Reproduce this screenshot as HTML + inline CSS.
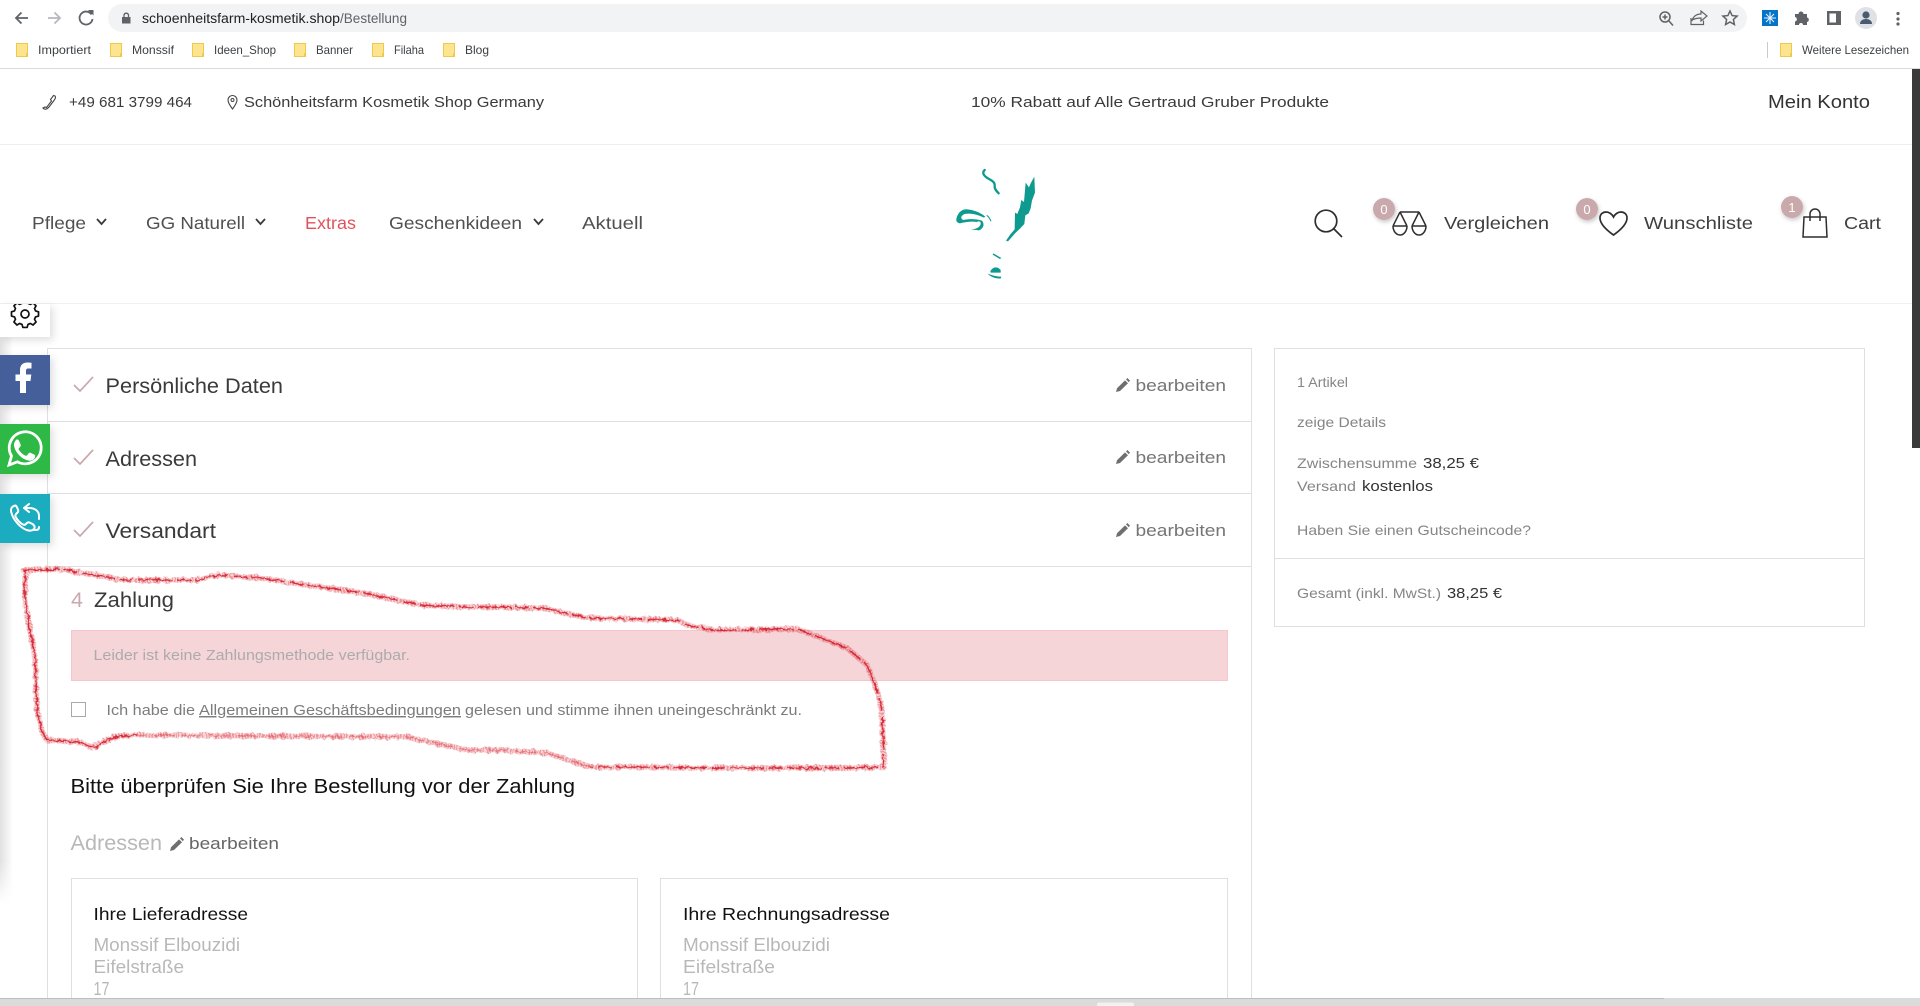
<!DOCTYPE html>
<html lang="de">
<head>
<meta charset="utf-8">
<title>Bestellung</title>
<style>
html,body{margin:0;padding:0;background:#fff;width:1920px;height:1006px;overflow:hidden}
svg{display:block}
text{font-family:"Liberation Sans",sans-serif;white-space:pre}
</style>
</head>
<body>
<svg xmlns="http://www.w3.org/2000/svg" width="1920" height="1006" viewBox="0 0 1920 1006">
<defs>
<filter id="sh" x="-40%" y="-40%" width="180%" height="180%"><feDropShadow dx="1" dy="2" stdDeviation="2" flood-color="#000" flood-opacity=".22"/></filter>
<filter id="sh2" x="-40%" y="-40%" width="180%" height="180%"><feDropShadow dx="3" dy="3" stdDeviation="4" flood-color="#000" flood-opacity=".13"/></filter>
<filter id="rough" x="-5%" y="-5%" width="110%" height="110%"><feTurbulence type="fractalNoise" baseFrequency=".22" numOctaves="2" seed="3"/><feDisplacementMap in="SourceGraphic" scale="5"/></filter>
<filter id="soft" x="-5%" y="-5%" width="110%" height="110%"><feGaussianBlur stdDeviation="1.100"/></filter>
<linearGradient id="edge" x1="0" x2="1" y1="0" y2="0"><stop offset="0" stop-color="#e0e0e0"/><stop offset="1" stop-color="#fff"/></linearGradient>
<linearGradient id="fade" x1="0" x2="0" y1="0" y2="1"><stop offset="0" stop-color="#fff" stop-opacity="0"/><stop offset="1" stop-color="#fff"/></linearGradient>
<g id="pen"><path fill="#6f6f6f" d="M0 14 L1 10.200 L9 2.400 L12 5.200 L4 13 Z M10 1.400 L11.400 0 L14 2.600 L12.800 4.200 Z"/></g>
<g id="folder"><path fill="#fde58f" stroke="#eec94b" stroke-width="1" d="M.5 .5H11.500V13.500H.5Z"/><path fill="#eec94b" d="M10 10h2v4h-2z"/></g>
<g id="chk"><path fill="none" stroke="#c9a9ac" stroke-width="1.700" d="M0 8 L6 14 L19 0"/></g>
</defs>

<!-- browser chrome -->
<rect x="108" y="4" width="1639" height="28" rx="14" fill="#f1f3f4"/>
<g fill="none" stroke="#5f6368" stroke-width="1.800">
<path d="M28 18H16M21.500 12.500L16 18l5.500 5.500"/>
<path stroke="#b5b8bc" d="M48 18H60M54.500 12.500L60 18l-5.500 5.500"/>
<path d="M91.500 14.500a6.500 6.500 0 1 0 1 4.500"/>
</g>
<path fill="#5f6368" d="M88 10l5.500 0v5.500z"/>
<path fill="#5f6368" d="M122 17h8.500v6.500h-8.500z"/>
<path fill="none" stroke="#5f6368" stroke-width="1.300" d="M124 17v-2a2.300 2.300 0 0 1 4.500 0v2"/>
<text x="142" y="23" font-size="13.500" fill="#202124" textLength="198" lengthAdjust="spacingAndGlyphs">schoenheitsfarm-kosmetik.shop</text>
<text x="340" y="23" font-size="13.500" fill="#5f6368" textLength="67" lengthAdjust="spacingAndGlyphs">/Bestellung</text>
<g fill="none" stroke="#5f6368" stroke-width="1.500">
<circle cx="1665" cy="17" r="5"/><path d="M1669 21l4 4.500M1665 14.500v5M1662.500 17h5"/>
<path d="M1691 18v6.500h12.500v-4M1692 21c1-5 5-7 9-7v-3l6 5-6 5v-3c-4 0-7 1-9 2z" stroke-width="1.200"/>
<path d="M1730 11l2.100 4.600 5 .5-3.700 3.400 1 5-4.400-2.500-4.400 2.500 1-5-3.700-3.400 5-.5z"/>
</g>
<rect x="1762" y="10" width="16" height="16" fill="#0573c7"/>
<path stroke="#e6f2ff" stroke-width="1.100" d="M1770 12v12M1764 18h12M1766 14l8 8M1774 14l-8 8"/>
<path fill="#5f6368" d="M1795 14h3.500a2.500 2.500 0 0 1 5 0h3.500v3.500a2.300 2.300 0 0 1 0 4.500V25h-4a2 2 0 0 0-4 0h-4v-3.500a2.300 2.300 0 0 0 0-4.500z"/>
<path fill="#5f6368" fill-rule="evenodd" d="M1827 11h14v14h-14zM1829.500 13.500v9h6.500v-9z"/>
<circle cx="1866" cy="18" r="11" fill="#dfe1e5"/>
<circle cx="1866" cy="15" r="3.600" fill="#4a5a70"/>
<path fill="#4a5a70" d="M1860 24c0-3.500 3-5 6-5s6 1.500 6 5z"/>
<g fill="#5f6368"><circle cx="1898" cy="13.500" r="1.600"/><circle cx="1898" cy="19" r="1.600"/><circle cx="1898" cy="24" r="1.600"/></g>

<use href="#folder" x="16" y="43"/><use href="#folder" x="110" y="43"/><use href="#folder" x="192" y="43"/><use href="#folder" x="294" y="43"/><use href="#folder" x="372" y="43"/><use href="#folder" x="443" y="43"/><use href="#folder" x="1780" y="43"/>
<g font-size="12" fill="#3c4043">
<text x="38" y="54" textLength="53" lengthAdjust="spacingAndGlyphs">Importiert</text>
<text x="132" y="54" textLength="42" lengthAdjust="spacingAndGlyphs">Monssif</text>
<text x="214" y="54" textLength="62" lengthAdjust="spacingAndGlyphs">Ideen_Shop</text>
<text x="316" y="54" textLength="37" lengthAdjust="spacingAndGlyphs">Banner</text>
<text x="394" y="54" textLength="30" lengthAdjust="spacingAndGlyphs">Filaha</text>
<text x="465" y="54" textLength="24" lengthAdjust="spacingAndGlyphs">Blog</text>
<text x="1802" y="54" textLength="107" lengthAdjust="spacingAndGlyphs">Weitere Lesezeichen</text>
</g>
<rect x="1767" y="42" width="1" height="16" fill="#c8cacc"/>
<rect x="0" y="68" width="1920" height="1" fill="#d9dadb"/>

<!-- top strip -->
<rect x="1912" y="69" width="8" height="379" fill="#3a3a3a"/>
<rect x="0" y="144" width="1912" height="1" fill="#eeeeee"/>
<path fill="none" stroke="#444" stroke-width="1.100" d="M43 108c1.500 2 4 1.500 6-1l5-6.500c1.500-2 2-3.500 1-4.500l-1.500-.5-3 4 1 1.500-5 6.500-1.500-.5z"/>
<g font-size="14.500" fill="#3b3b3b">
<text x="69" y="107" textLength="123" lengthAdjust="spacingAndGlyphs">+49 681 3799 464</text>
<text x="244" y="107" textLength="300" lengthAdjust="spacingAndGlyphs">Schönheitsfarm Kosmetik Shop Germany</text>
<text x="971" y="107" textLength="358" lengthAdjust="spacingAndGlyphs">10% Rabatt auf Alle Gertraud Gruber Produkte</text>
</g>
<path fill="none" stroke="#444" stroke-width="1.100" d="M232.500 109c-3-4-4.500-6.500-4.500-9a4.500 4.500 0 0 1 9 0c0 2.500-1.500 5-4.500 9z"/>
<circle cx="232.500" cy="100" r="1.500" fill="none" stroke="#444"/>
<text x="1768" y="108" font-size="18.500" fill="#333" textLength="102" lengthAdjust="spacingAndGlyphs">Mein Konto</text>

<!-- nav -->
<g font-size="17.500" fill="#505050">
<text x="32" y="229" textLength="54" lengthAdjust="spacingAndGlyphs">Pflege</text>
<text x="146" y="229" textLength="99" lengthAdjust="spacingAndGlyphs">GG Naturell</text>
<text x="305" y="229" fill="#e0525b" textLength="51" lengthAdjust="spacingAndGlyphs">Extras</text>
<text x="389" y="229" textLength="133" lengthAdjust="spacingAndGlyphs">Geschenkideen</text>
<text x="582" y="229" textLength="61" lengthAdjust="spacingAndGlyphs">Aktuell</text>
</g>
<g fill="none" stroke="#3a3a3a" stroke-width="1.800">
<path d="M97 219l4.500 5 4.500-5"/><path d="M256 219l4.500 5 4.500-5"/><path d="M534 219l4.500 5 4.500-5"/>
</g>

<!-- logo -->
<g transform="translate(880 150) scale(.3333)" fill="#0f9a90">
<path fill="none" stroke="#0f9a90" stroke-width="7" stroke-linecap="round" d="M314 60c-8 8-4 16 8 24 14 8 24 12 22 26 0 8 6 14 12 20"/>
<path d="M378 272L392 252L404 238L405 188L412 192L420 172L424 150L432 156L437 98L447 112L452 100L463 80L465 128L456 152L452 175L446 190L436 196L433 222L420 236L405 250L384 274Z"/>
<path d="M229 208C232 190 245 176 262 178C285 180 305 190 316 200L312 203C295 194 270 188 254 192C243 196 240 206 250 210C265 206 290 206 306 212C314 222 312 234 298 241L272 238C290 238 302 230 302 220C290 212 262 214 240 220C232 218 228 214 229 208Z"/>
<circle cx="296" cy="220" r="6" fill="#fff"/>
<path fill="none" stroke="#0f9a90" stroke-width="3" d="M320 196c6 4 10 10 13 18"/>
<path d="M340 310L364 324L360 327L338 314Z"/>
<path d="M331 364C338 350 352 348 362 360L362 368L332 368Z"/>
<path d="M323 371C335 376 350 380 364 380L362 386C345 386 330 380 323 371Z"/>
</g>

<!-- right icons -->
<g fill="none" stroke="#2e2e2e" stroke-width="1.700">
<circle cx="1326" cy="221" r="10.800"/><path d="M1334 229l8 8"/>
<path stroke-width="1.500" d="M1400 212H1419M1400 212L1393 226M1400 212L1407 226M1419 212L1412 226M1419 212L1426 226M1393 226H1407M1412 226H1426M1393 226a7 9 0 0 0 14 0M1412 226a7 9 0 0 0 14 0"/>
<path d="M1613.500 235C1605 229 1600 223 1600 218C1600 214 1603 212 1606 212C1609 212 1612 214 1613.500 217C1615 214 1618 212 1621 212C1624 212 1627 214 1627 218C1627 223 1622 229 1613.500 235Z"/>
<path stroke-width="1.500" d="M1804 217H1826L1827 237H1803ZM1810 221V214a5 5 0 0 1 10 0V221"/>
</g>
<g font-size="17.500" fill="#3f3f3f">
<text x="1444" y="229" textLength="105" lengthAdjust="spacingAndGlyphs">Vergleichen</text>
<text x="1644" y="229" textLength="109" lengthAdjust="spacingAndGlyphs">Wunschliste</text>
<text x="1844" y="229" textLength="37" lengthAdjust="spacingAndGlyphs">Cart</text>
</g>
<g filter="url(#sh)" fill="#c9a9ac"><circle cx="1384" cy="209" r="11"/><circle cx="1587" cy="209" r="11"/><circle cx="1792" cy="207" r="11"/></g>
<g font-size="13" fill="#fff" text-anchor="middle"><text x="1384" y="214">0</text><text x="1587" y="214">0</text><text x="1792" y="212">1</text></g>
<rect x="0" y="303" width="1912" height="1" fill="#f0f0f0"/>

<!-- main card lines -->
<g fill="#dfdfdf">
<rect x="47" y="348" width="1205" height="1"/>
<rect x="47" y="348" width="1" height="650"/>
<rect x="1251" y="348" width="1" height="650"/>
<rect x="47" y="421" width="1205" height="1"/>
<rect x="47" y="493" width="1205" height="1"/>
<rect x="47" y="566" width="1205" height="1"/>
</g>
<use href="#chk" x="74" y="377"/><use href="#chk" x="74" y="450"/><use href="#chk" x="74" y="522"/>
<g font-size="21" fill="#3a3a3a">
<text x="105.500" y="393" textLength="177.500" lengthAdjust="spacingAndGlyphs">Persönliche Daten</text>
<text x="105.500" y="466" textLength="91.500" lengthAdjust="spacingAndGlyphs">Adressen</text>
<text x="105.500" y="538" textLength="110.500" lengthAdjust="spacingAndGlyphs">Versandart</text>
<text x="94" y="607" textLength="80" lengthAdjust="spacingAndGlyphs">Zahlung</text>
<text x="71" y="607" fill="#c9a9ac" textLength="12" lengthAdjust="spacingAndGlyphs">4</text>
</g>
<use href="#pen" x="1116" y="378"/><use href="#pen" x="1116" y="450"/><use href="#pen" x="1116" y="523"/>
<g font-size="17" fill="#757575">
<text x="1135.500" y="391" textLength="90.500" lengthAdjust="spacingAndGlyphs">bearbeiten</text>
<text x="1135.500" y="463" textLength="90.500" lengthAdjust="spacingAndGlyphs">bearbeiten</text>
<text x="1135.500" y="536" textLength="90.500" lengthAdjust="spacingAndGlyphs">bearbeiten</text>
</g>

<!-- alert -->
<rect x="71.500" y="630.500" width="1156" height="50" fill="#f6d5d8" stroke="#f5c6cb"/>
<text x="93.500" y="660" font-size="15" fill="#ababad" textLength="316.500" lengthAdjust="spacingAndGlyphs">Leider ist keine Zahlungsmethode verfügbar.</text>
<rect x="71.500" y="702.500" width="14" height="14" fill="#fff" stroke="#a9a9a9"/>
<g font-size="14.500" fill="#7c7c7c">
<text x="106.500" y="715" textLength="88.500" lengthAdjust="spacingAndGlyphs">Ich habe die</text>
<text x="199" y="715" text-decoration="underline" textLength="262" lengthAdjust="spacingAndGlyphs">Allgemeinen Geschäftsbedingungen</text>
<text x="465" y="715" textLength="337" lengthAdjust="spacingAndGlyphs">gelesen und stimme ihnen uneingeschränkt zu.</text>
</g>

<!-- review -->
<text x="70.500" y="793" font-size="20.500" fill="#111" textLength="504.500" lengthAdjust="spacingAndGlyphs">Bitte überprüfen Sie Ihre Bestellung vor der Zahlung</text>
<text x="70.500" y="850" font-size="21" fill="#b8b8b8" textLength="91.500" lengthAdjust="spacingAndGlyphs">Adressen</text>
<use href="#pen" x="170" y="837"/>
<text x="189" y="849" font-size="17" fill="#666" textLength="90" lengthAdjust="spacingAndGlyphs">bearbeiten</text>
<g fill="#dfdfdf">
<rect x="71" y="878" width="567" height="1"/><rect x="71" y="878" width="1" height="120"/><rect x="637" y="878" width="1" height="120"/>
<rect x="660" y="878" width="568" height="1"/><rect x="660" y="878" width="1" height="120"/><rect x="1227" y="878" width="1" height="120"/>
</g>
<g font-size="17.500" fill="#111">
<text x="93.500" y="920" textLength="154.500" lengthAdjust="spacingAndGlyphs">Ihre Lieferadresse</text>
<text x="683" y="920" textLength="207" lengthAdjust="spacingAndGlyphs">Ihre Rechnungsadresse</text>
</g>
<g font-size="18" fill="#b8b8b8">
<text x="93.500" y="951" textLength="146.500" lengthAdjust="spacingAndGlyphs">Monssif Elbouzidi</text>
<text x="93.500" y="973" textLength="90.500" lengthAdjust="spacingAndGlyphs">Eifelstraße</text>
<text x="93.500" y="995" textLength="16" lengthAdjust="spacingAndGlyphs">17</text>
<text x="683" y="951" textLength="147" lengthAdjust="spacingAndGlyphs">Monssif Elbouzidi</text>
<text x="683" y="973" textLength="92" lengthAdjust="spacingAndGlyphs">Eifelstraße</text>
<text x="683" y="995" textLength="16" lengthAdjust="spacingAndGlyphs">17</text>
</g>

<!-- summary -->
<rect x="1274.500" y="348.500" width="590" height="278" fill="#fff" stroke="#dfdfdf"/>
<rect x="1275" y="558" width="589" height="1" fill="#dfdfdf"/>
<g font-size="14" fill="#858585">
<text x="1297" y="387" textLength="51" lengthAdjust="spacingAndGlyphs">1 Artikel</text>
<text x="1297" y="427" textLength="89" lengthAdjust="spacingAndGlyphs">zeige Details</text>
<text x="1297" y="468" textLength="120" lengthAdjust="spacingAndGlyphs">Zwischensumme</text>
<text x="1297" y="491" textLength="59" lengthAdjust="spacingAndGlyphs">Versand</text>
<text x="1297" y="535" textLength="234" lengthAdjust="spacingAndGlyphs">Haben Sie einen Gutscheincode?</text>
<text x="1297" y="598" textLength="144" lengthAdjust="spacingAndGlyphs">Gesamt (inkl. MwSt.)</text>
</g>
<g font-size="14.500" fill="#333">
<text x="1423" y="468" textLength="56" lengthAdjust="spacingAndGlyphs">38,25 €</text>
<text x="1362" y="491" textLength="71" lengthAdjust="spacingAndGlyphs">kostenlos</text>
<text x="1447" y="598" textLength="55" lengthAdjust="spacingAndGlyphs">38,25 €</text>
</g>

<!-- left sidebar -->
<rect x="0" y="337" width="13" height="566" fill="url(#edge)"/>
<rect x="0" y="860" width="14" height="44" fill="url(#fade)"/>
<g filter="url(#sh2)">
<rect x="0" y="304" width="50" height="33" fill="#fff"/>
<rect x="0" y="355" width="50" height="50" fill="#445f9b"/>
<rect x="0" y="424" width="50" height="50" fill="#2fb844"/>
<rect x="0" y="494" width="50" height="49" fill="#1bacbf"/>
</g>
<clipPath id="gc"><rect x="0" y="304" width="50" height="33"/></clipPath>
<g clip-path="url(#gc)">
<path transform="translate(25 314) scale(.85) translate(-25 -318)" fill="none" stroke="#111" stroke-width="2" stroke-linejoin="round" d="M22.500 302h5l1 3.500 2.800 1.200 3.200-1.800 3.500 3.500-1.800 3.200 1.200 2.800 3.500 1v5l-3.500 1-1.200 2.800 1.800 3.200-3.500 3.500-3.200-1.800-2.800 1.200-1 3.500h-5l-1-3.500-2.800-1.200-3.200 1.800-3.500-3.500 1.800-3.200-1.200-2.800-3.500-1v-5l3.500-1 1.200-2.800-1.800-3.200 3.500-3.500 3.200 1.800 2.800-1.200z"/>
<circle cx="25" cy="314" r="4" fill="none" stroke="#111" stroke-width="1.700"/>
</g>
<path fill="#fff" d="M20 393V381H15.500V374.500H20V370C20 365 23 362.500 27.500 362.500C29 362.500 30.500 362.700 31.500 362.800V368.500H28.500C26.500 368.500 26 369.500 26 371V374.500H31.300L30.500 381H26V393Z"/>
<g transform="translate(-2 0)">
<path fill="none" stroke="#fff" stroke-width="2.800" d="M11 465L13.500 456A16 16 0 1 1 19.500 461.800Z"/>
<path fill="#fff" d="M19 439.500c1 0 1.500.3 2 1.300l1.700 4c.2.700 0 1.300-.4 1.800l-1.500 1.900c-.3.400-.3.800 0 1.200 1.700 2.800 3.800 4.700 6.800 6 .5.200.9.100 1.200-.2l2-2.400c.4-.5 1-.6 1.500-.4l4 1.900c.7.300 1 .8.900 1.500-.3 3-3 4.600-5.500 4.600-7.500-.8-15-8.500-15.700-15.500 0-3 1.500-4.700 2.500-5.700z"/>
</g>
<g fill="none" stroke="#fff" stroke-width="2" stroke-linecap="round" stroke-linejoin="round">
<path d="M14 506c-3 1-3.500 4-2.500 7 2 7 8 14 15 17 3 1 7 1 8-2 .5-2-.5-3-2-4l-3-1.500c-1.500-.5-2.500 0-3.500 1.500-1 1-2 1-3 .5-3-1.500-6-5-7.500-8-.5-1 0-2 1-3 1.500-1 2-2.500 1.500-4l-1.500-3c-.5-1-1.500-1.500-2.500-.5z"/>
<path d="M29 504l-5 4 5 4M24 508h5c6 0 10 3 10 8v3"/>
<path d="M33 530h3c2 0 3-1 3-3"/>
</g>

<!-- red scribble -->
<g fill="none" stroke-linejoin="round" stroke-linecap="butt" filter="url(#rough)">
<path stroke="#de4a56" stroke-opacity=".22" stroke-width="6" d="M25 570L60 569L83 573L123 580L197 580L217 575L260 578L307 585L363 593L397 600L420 605L467 607L493 607L543 608L587 618L677 620L687 625L713 630L797 629L813 635L847 648L867 665L877 690L882 710L884 767L847 768L720 768L640 767L590 767L547 753L497 750L467 750L407 737L137 735L113 737L93 748L80 742L47 740L42 732L37 710L35 657L30 630L25 600Z"/>
<path stroke="#d8202c" stroke-opacity=".35" stroke-width="5" stroke-dasharray="1.500 1.500" d="M25 570L60 569L83 573L123 580L197 580L217 575L260 578L307 585L363 593L397 600L420 605L467 607L493 607L543 608L587 618L677 620L687 625L713 630L797 629L813 635L847 648L867 665L877 690L882 710L884 767L847 768L720 768L640 767L590 767L547 753L497 750L467 750L407 737L137 735L113 737L93 748L80 742L47 740L42 732L37 710L35 657L30 630L25 600Z"/>
<path stroke="#d3101e" stroke-opacity=".8" stroke-width="1.600" stroke-dasharray="34 5 14 4" d="M25 570L60 569L83 573L123 580L197 580L217 575L260 578L307 585L363 593L397 600L420 605L467 607L493 607L543 608L587 618L677 620L687 625L713 630L797 629L813 635L847 648L867 665L877 690L882 710L884 767L847 768L720 768L640 767L590 767"/>
<path stroke="#d3101e" stroke-opacity=".35" stroke-width="1.400" stroke-dasharray="20 8" d="M590 767L547 753L497 750L467 750L407 737L137 735"/>
<path stroke="#d3101e" stroke-opacity=".8" stroke-width="1.600" d="M137 735L113 737L93 748L80 742L47 740L42 732L37 710L35 657L30 630L25 600L25 570"/>
</g>

<!-- bottom scrollbar -->
<rect x="0" y="998" width="1920" height="8" fill="#dbdbdb"/>
<rect x="0" y="998" width="1664" height="1" fill="#bdbdbd"/>
<path d="M1097 1006v-1.500a2 2 0 0 1 2-2h33a2 2 0 0 1 2 2v1.500z" fill="#f2f2f2"/>
</svg>
</body>
</html>
